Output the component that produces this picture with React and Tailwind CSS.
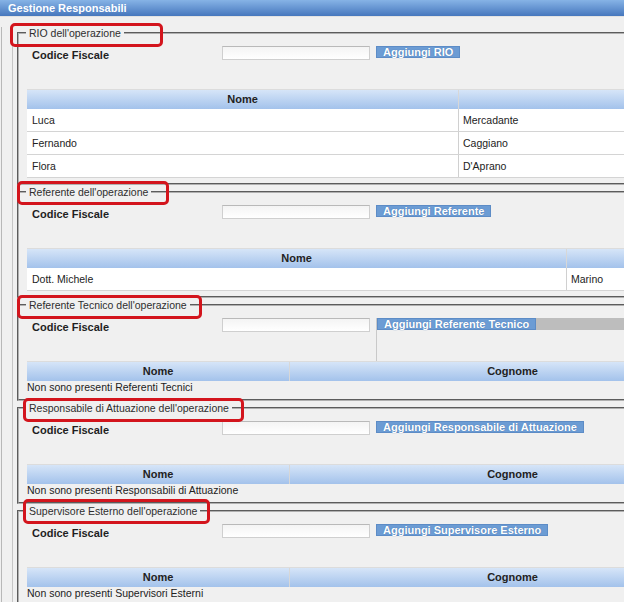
import React from 'react';

const sections = [
  {
    legend: "RIO dell'operazione",
    button: 'Aggiungi RIO',
    cols: [431],
    headers: ['Nome', ''],
    rows: [
      ['Luca', 'Mercadante'],
      ['Fernando', 'Caggiano'],
      ['Flora', "D'Aprano"],
    ],
  },
  {
    legend: "Referente dell'operazione",
    button: 'Aggiungi Referente',
    cols: [539],
    headers: ['Nome', ''],
    rows: [['Dott. Michele', 'Marino']],
  },
  {
    legend: "Referente Tecnico dell'operazione",
    button: 'Aggiungi Referente Tecnico',
    cols: [262],
    headers: ['Nome', 'Cognome'],
    empty: 'Non sono presenti Referenti Tecnici',
    extra: true,
  },
  {
    legend: "Responsabile di Attuazione dell'operazione",
    button: 'Aggiungi Responsabile di Attuazione',
    cols: [262],
    headers: ['Nome', 'Cognome'],
    empty: 'Non sono presenti Responsabili di Attuazione',
  },
  {
    legend: "Supervisore Esterno dell'operazione",
    button: 'Aggiungi Supervisore Esterno',
    cols: [262],
    headers: ['Nome', 'Cognome'],
    empty: 'Non sono presenti Supervisori Esterni',
  },
];

// red annotation boxes drawn over the legends
const marks = [
  'left-[10px] top-[23px] w-[153px] h-[24px]',
  'left-[17px] top-[181px] w-[152px] h-[24px]',
  'left-[17px] top-[295px] w-[185px] h-[24px]',
  'left-[23px] top-[398px] w-[221px] h-[24px]',
  'left-[23px] top-[499px] w-[187px] h-[25px]',
];

const Section = ({ s, first }) => {
  return (
    <fieldset
      className={`${first ? 'mt-[10px]' : 'mt-px'} ml-[4px] w-[720px] border-2 [border-style:groove] border-[#b0b0b0] pl-[8px] ${s.empty ? 'pb-[6px]' : 'pb-[5px]'}`}
    >
      <legend className="ml-[-1px] px-[3px] text-[10.5px] leading-[12px] text-[#2e2e2e]">{s.legend}</legend>

      {/* Codice Fiscale row */}
      <div className="mt-[7px] flex h-[43px] items-start">
        <div className="w-[195px] pl-[5px] pt-[3px] text-[11px] font-bold leading-[12px] text-[#1f1f1f]">Codice Fiscale</div>
        <input
          type="text"
          className="h-[14px] w-[148px] border border-[#cfcfcf] border-t-[#b9b9b9] bg-[linear-gradient(#f4f4f4,#ffffff)] outline-none"
        />
        <div className={`ml-[6px] flex-1 self-stretch ${s.extra ? 'border-l border-[#c9c9c9]' : ''}`}>
          <div className="flex">
            <button className="h-[12px] whitespace-nowrap border border-[#5d8cc6] bg-[#6c9cd4] px-[6px] text-[11px] font-bold leading-[10px] text-white [text-shadow:0_0_1px_#3d6aa3]">
              {s.button}
            </button>
            {s.extra && <div className="h-[12px] flex-1 bg-[#bdbdbd]" />}
          </div>
        </div>
      </div>

      {/* table */}
      <div className="text-[#222]">
        <div className="flex h-[20px] border-t border-[#dcdcdc] bg-[linear-gradient(#d6e5f8,#a3c2eb)] text-[11px] font-bold leading-[19px]">
          <div className="text-center" style={{ width: s.cols[0] }}>{s.headers[0]}</div>
          <div className="flex-1 border-l border-[#d7d7d7] text-center">{s.headers[1]}</div>
        </div>
        {s.rows &&
          s.rows.map((r, i) => (
            <div key={i} className="flex h-[23px] border-b border-[#d4d4d4] bg-white text-[10.5px] leading-[22px]">
              <div className="pl-[5px]" style={{ width: s.cols[0] }}>{r[0]}</div>
              <div className="flex-1 border-l border-[#d0d0d0] pl-[4px]">{r[1]}</div>
            </div>
          ))}
        {s.empty && <div className="text-[10.5px] leading-[12px]">{s.empty}</div>}
      </div>
    </fieldset>
  );
};

export default function App() {
  return (
    <div className="relative h-[602px] w-[624px] overflow-hidden bg-[#f0f0f0] font-['Liberation_Sans',Arial,sans-serif]">
      {/* title bar */}
      <div className="h-[17px] border-b border-[#e2e2e2] bg-[linear-gradient(#86b3e6,#4677bd)] pl-[8px] text-[11px] font-bold leading-[16px] text-white">
        Gestione Responsabili
      </div>

      <div className="ml-px h-[585px] border-l border-[#b8b8b8]">
        <div className="ml-[10px] h-full border-l border-[#c6c6c6]">
          {sections.map((s, i) => (
            <Section key={i} s={s} first={i === 0} />
          ))}
        </div>
      </div>

      {marks.map((m, i) => (
        <div key={i} className={`pointer-events-none absolute rounded-[5px] border-[3px] border-[#d3151d] ${m}`} />
      ))}
    </div>
  );
}
